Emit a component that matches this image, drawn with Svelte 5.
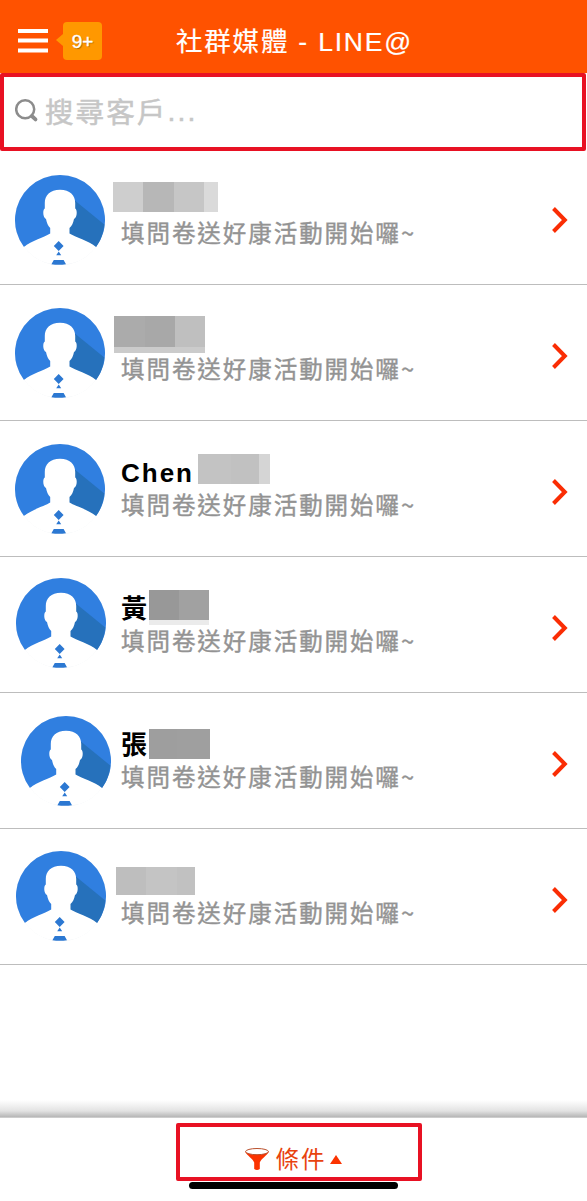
<script lang="ts">
	interface Tile {
		w: number;
		color: string;
	}

	interface Mask {
		x: number;
		y: number;
		h: number;
		tiles: Tile[];
		fringe?: number;
		fringeColor?: string;
	}

	interface Customer {
		name: string;
		message: string;
		avatar: { x: number; y: number };
		mask: Mask;
	}

	const message = '填問卷送好康活動開始囉~';

	const customers: Customer[] = [
		{
			name: '',
			message,
			avatar: { x: 15, y: 26 },
			mask: { x: 113, y: 33, h: 30, tiles: [{ w: 30, color: '#cecece' }, { w: 31, color: '#b7b7b7' }, { w: 30, color: '#c6c6c6' }, { w: 14, color: '#dadada' }] }
		},
		{
			name: '',
			message,
			avatar: { x: 15, y: 22.5 },
			mask: { x: 114, y: 31, h: 31, tiles: [{ w: 31, color: '#ababab' }, { w: 30, color: '#a8a8a8' }, { w: 30, color: '#bfbfbf' }], fringe: 6, fringeColor: '#cbcbcb' }
		},
		{
			name: 'Chen',
			message,
			avatar: { x: 15, y: 22.5 },
			mask: { x: 198, y: 33, h: 30, tiles: [{ w: 33, color: '#c3c3c3' }, { w: 28, color: '#c1c1c1' }, { w: 11, color: '#d5d5d5' }] }
		},
		{
			name: '黃',
			message,
			avatar: { x: 16, y: 21 },
			mask: { x: 149, y: 33, h: 30, tiles: [{ w: 30, color: '#989898' }, { w: 30, color: '#a1a1a1' }], fringe: 5, fringeColor: '#ebebeb' }
		},
		{
			name: '張',
			message,
			avatar: { x: 20.7, y: 22.5 },
			mask: { x: 149, y: 36, h: 30, tiles: [{ w: 28, color: '#9e9e9e' }, { w: 33, color: '#9f9f9f' }] }
		},
		{
			name: '',
			message,
			avatar: { x: 16, y: 22 },
			mask: { x: 116, y: 38, h: 28, tiles: [{ w: 30, color: '#bebebe' }, { w: 31, color: '#c4c4c4' }, { w: 18, color: '#c1c1c1' }] }
		}
	];
</script>

<div class="screen">
	<header>
		<svg class="menu" viewBox="0 0 30 24">
			<path d="M0 2h30M0 11.5h30M0 21.5h30" stroke="#fff" stroke-width="4" />
		</svg>
		<span class="badge">9+</span>
		<h1>社群媒體 - LINE@</h1>
	</header>

	<div class="search">
		<svg viewBox="0 0 24 24">
			<circle cx="10.2" cy="10.3" r="9" fill="none" stroke="#8c8c8c" stroke-width="2.5" />
			<path d="M16.8 17l3.7 3.4" stroke="#8c8c8c" stroke-width="3.8" stroke-linecap="round" />
		</svg>
		<span>搜尋客戶<i>...</i></span>
		<div class="mark"></div>
	</div>

	<main>
		{#each customers as c}
			<div class="row">
				<svg class="avatar" viewBox="0 0 90 90" style:left="{c.avatar.x}px" style:top="{c.avatar.y}px">
					<circle cx="45" cy="45" r="44.7" fill="#fff" stroke="#e4e9ee" stroke-width="0.6" />
					<path d="M9 72A45 45 0 1 1 81 72Q45 52 9 72Z" fill="#307fe0" />
					<path d="M58 24L89.3 49.5A45 45 0 0 1 81 72L52 60Z" fill="#2671bb" />
					<path
						d="M45 14.7C35 14.7 29.8 20.5 29.8 28V33.5C27.6 34.5 27.6 42.5 31 44C31.8 48 33 51 35.2 53V58.6C30 62 16 66 9 72C20 86 32 89.5 45 89.5S70 86 81 72C74 66 60 62 54.5 58.6V53C57 51 58.2 48 59 44C62.4 42.5 62.4 34.5 60.2 33.5V28C60.2 20.5 55 14.7 45 14.7Z"
						fill="#fff"
					/>
					<path d="M43.7 66.1l4.9 4.9-4.9 4.9L38.8 71zM43.7 76.4l2.5 3.8h-5zM38.8 85h9.8l2.4 4.2q-7.3 1-14.6 0z" fill="#2c78d2" />
				</svg>
				<div class="info">
					<div class="name">{c.name}</div>
					<div class="message">{c.message}</div>
				</div>
				<svg class="chevron" viewBox="0 0 18 28">
					<path d="M2.5 2.5L13.8 14L2.5 25.5" fill="none" stroke="#fa2d04" stroke-width="4" />
				</svg>
				<div class="mask" style:left="{c.mask.x}px" style:top="{c.mask.y}px">
					{#each c.mask.tiles as t}
						<div
							style:width="{t.w}px"
							style:height="{c.mask.h}px"
							style:background={t.color}
							style:border-bottom="{c.mask.fringe ?? 0}px solid {c.mask.fringeColor ?? 'transparent'}"
						></div>
					{/each}
				</div>
			</div>
		{/each}
	</main>

	<div class="shade"></div>
	<footer>
		<div class="filter">
			<svg class="funnel" viewBox="0 0 24 23">
				<path d="M0 3.5C2 7.5 8 11 9.2 14.5V21Q12 23 14.8 21V14.5C16 11 22 7.5 24 3.5Z" fill="#fb3300" />
				<ellipse cx="12" cy="3.6" rx="11.4" ry="3.1" fill="#fff" stroke="#b9502d" stroke-width="1" />
			</svg>
			<span>條件</span>
			<svg class="caret" viewBox="0 0 12 9"><path d="M6 0l6 9H0z" fill="#fb3300" /></svg>
		</div>
		<div class="home"></div>
	</footer>
</div>

<style>
	:global(body) { margin: 0; background: #fff; }
	.screen {
		width: 587px;
		height: 1201px;
		display: flex;
		flex-direction: column;
		overflow: hidden;
		background: #fff;
		font-family: "Liberation Sans", "Noto Sans CJK TC", sans-serif;
	}

	header {
		position: relative;
		height: 73px;
		flex: none;
		display: flex;
		align-items: center;
		box-sizing: border-box;
		padding: 9px 18px 0;
		background: #ff5200;
		color: #fff;
	}
	.menu { width: 30px; height: 24px; margin-right: 15px; }
	.badge {
		position: relative;
		width: 39px;
		height: 38px;
		line-height: 39px;
		border-radius: 4px;
		background: #ff9800;
		text-align: center;
		font-size: 19px;
		-webkit-text-stroke: 0.4px #fff;
		text-shadow: 1px 1px 1px #a86400;
	}
	.badge::before {
		content: '';
		position: absolute;
		left: -7px;
		top: 12px;
		border: solid transparent;
		border-width: 6px 7px 6px 0;
		border-right-color: #ff9800;
	}
	h1 {
		margin: 2px 0 0 74px;
		font-size: 26.5px;
		font-weight: 400;
		line-height: 40px;
		letter-spacing: 1.8px;
		white-space: nowrap;
		-webkit-text-stroke: 0.2px #fff;
	}

	.search {
		position: relative;
		height: 76px;
		flex: none;
		display: flex;
		align-items: center;
		box-sizing: border-box;
		padding: 0 0 0 15px;
		color: #c6c6c6;
		font-size: 28.5px;
		letter-spacing: 2.1px;
		-webkit-text-stroke: 0.5px #c6c6c6;
	}
	.search svg { width: 24px; height: 24px; margin-right: 6px; }
	.search span { margin-top: -1px; }
	.search i { position: relative; top: -2px; font-style: normal; }
	.mark {
		position: absolute;
		left: 0;
		top: 0;
		width: 586px;
		height: 78px;
		box-sizing: border-box;
		border: 4px solid #e81123;
		border-radius: 2px;
		z-index: 1;
	}

	.row {
		position: relative;
		height: 136px;
		box-sizing: border-box;
		display: flex;
		justify-content: space-between;
		border-bottom: 1px solid #bdbdbd;
		padding: 0 18px 0 121px;
	}
	.avatar { position: absolute; width: 90px; height: 90px; }
	.info { padding-top: 35px; white-space: nowrap; }
	.name { height: 34px; line-height: 34px; font-size: 26px; font-weight: 700; letter-spacing: 2px; color: #000; }
	.message {
		height: 32px;
		line-height: 28px;
		font-family: "Noto Sans CJK TC", sans-serif;
		font-size: 23.5px;
		letter-spacing: 1.95px;
		color: #939393;
		-webkit-text-stroke: 0.4px #939393;
	}
	.chevron { width: 18px; height: 28px; margin-top: 56.5px; }
	.mask { position: absolute; display: flex; }

	.shade {
		height: 18px;
		margin-top: auto;
		flex: none;
		background: linear-gradient(#fff, #e3e3e3 60%, #b9b9b9 92%, #d8d8d8);
	}
	footer {
		height: 83px;
		flex: none;
		display: flex;
		flex-direction: column;
		align-items: center;
	}
	.filter {
		width: 246px;
		height: 58px;
		box-sizing: border-box;
		margin: 5px 0 1px 10px;
		border: 4px solid #e81123;
		border-radius: 2px;
		display: flex;
		align-items: center;
		padding: 12px 0 0 65px;
		color: #e8430f;
		font-size: 23.5px;
		letter-spacing: 2px;
	}
	.funnel { width: 24px; height: 23px; margin: 2px 7px 0 0; }
	.caret { width: 12px; height: 9px; margin: 3px 0 0 3px; }
	.home { width: 209px; height: 7px; border-radius: 4px; background: #000; }
</style>
